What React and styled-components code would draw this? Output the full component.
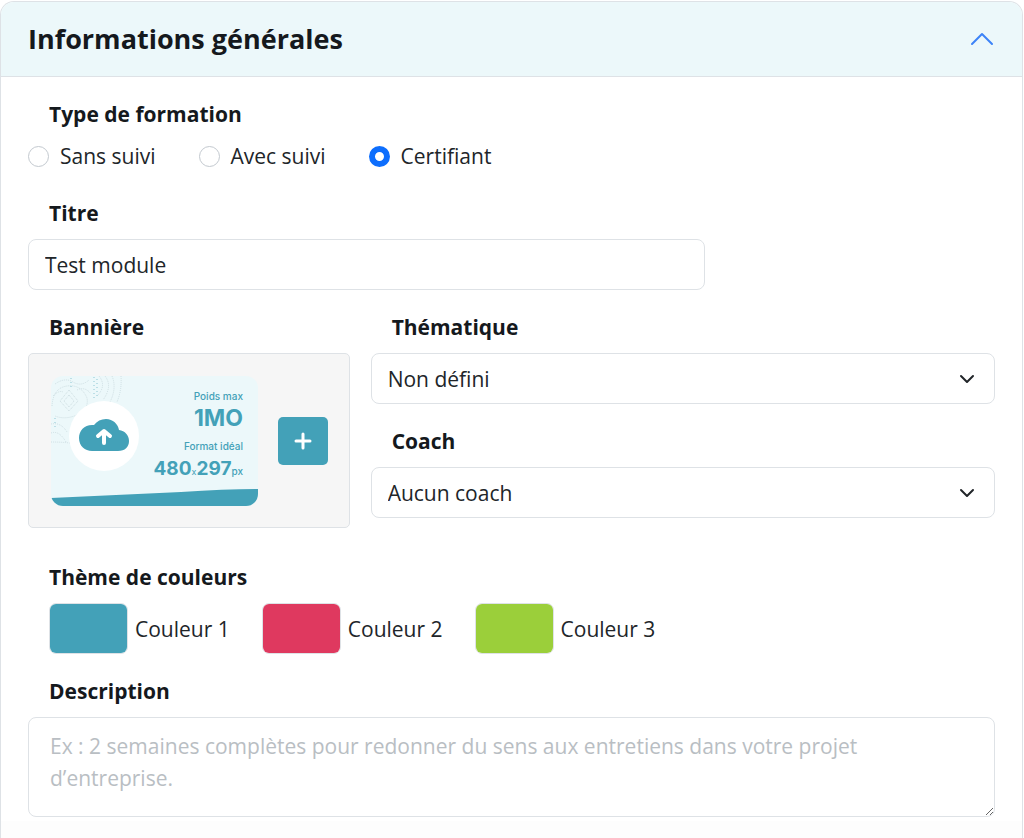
import React, { useState } from "react";
import styled, { createGlobalStyle } from "styled-components";

const Global = createGlobalStyle`
  *, *::before, *::after { box-sizing: border-box; }
  body {
    margin: 0;
    background: #fff;
    color: #212529;
    font: 400 21px/32px "Open Sans", sans-serif;
  }
  button, input, select, textarea { font: inherit; color: inherit; }
`;

const line = "#dee2e6";
const teal = "#43a1b8";

const Card = styled.section`
  display: flex;
  flex-direction: column;
  min-height: calc(100vh - 1px);
  margin: 1px 1px 0 0;
  border: 1px solid ${line};
  border-bottom: 0;
  border-radius: 14px 14px 0 0;
  overflow: hidden;
`;

const Header = styled.h2`
  margin: 0;
  border-bottom: 1px solid ${line};
`;

const Toggle = styled.button`
  display: flex;
  align-items: center;
  justify-content: space-between;
  width: 100%;
  padding: 18px 27px;
  border: 0;
  background: #ecf8fa;
  color: #15191d;
  font-size: 27px;
  font-weight: 700;
  line-height: 38px;
  text-align: left;
`;

const Body = styled.form`
  display: flex;
  flex-direction: column;
  gap: 21px;
  padding: 21px 27px 0;
`;

const Field = styled.div`
  display: flex;
  flex-direction: column;
  gap: 10px;
  min-width: 0;
  width: ${(p) => p.$width || "auto"};
`;

const Label = styled.label`
  padding-left: 21px;
  color: #15191d;
  font-weight: 700;
`;

const RadioRow = styled.div`
  display: flex;
  gap: 43px;
  padding-bottom: 4px;
`;

const Choice = styled.label`
  display: flex;
  align-items: center;
  gap: 11px;
`;

const Radio = styled.input`
  appearance: none;
  width: 21px;
  height: 21px;
  margin: 0;
  border: 1px solid #c3c9cf;
  border-radius: 50%;
  background: #fff;
  &:checked { border: 6px solid #0d6efd; }
`;

const control = `
  width: 100%;
  border: 1px solid ${line};
  border-radius: 8px;
  background-color: #fff;
`;

const TextInput = styled.input`
  ${control}
  height: 51px;
  padding: 8px 16px;
`;

const SelectWrap = styled.div`
  display: grid;
  align-items: center;
  > * { grid-area: 1 / 1; }
  > svg { justify-self: end; margin-right: 20px; pointer-events: none; }
`;

const Select = styled.select`
  ${control}
  appearance: none;
  height: 51px;
  padding: 8px 48px 8px 16px;
`;

const TextArea = styled.textarea`
  ${control}
  display: block;
  height: 100px;
  padding: 12px 21px;
  resize: vertical;
  &::placeholder { color: #b9bec3; opacity: 1; }
`;

const Columns = styled.div`
  display: grid;
  grid-template-columns: 34fr 66fr;
  gap: 21px;
  margin-bottom: 12px;
`;

const Stack = styled.div`
  display: flex;
  flex-direction: column;
  gap: 21px;
  min-width: 0;
`;

const BannerBox = styled.div`
  display: flex;
  align-items: center;
  gap: 20px;
  height: 175px;
  padding-left: 22px;
  border: 1px solid ${line};
  border-radius: 5px;
  background: #f6f6f6;
  > svg { flex: none; }
`;

const AddButton = styled.button`
  display: flex;
  align-items: center;
  justify-content: center;
  flex: none;
  width: 50px;
  height: 48px;
  padding: 0;
  border: 0;
  border-radius: 5px;
  background: ${teal};
`;

const Swatches = styled.div`
  display: flex;
  gap: 32px;
  padding-left: 21px;
`;

const SwatchLabel = styled.label`
  display: flex;
  align-items: center;
  gap: 7px;
`;

const Swatch = styled.input`
  appearance: none;
  width: 79px;
  height: 51px;
  padding: 0;
  border: 1px solid ${line};
  border-radius: 7px;
  background: ${(p) => p.value};
  overflow: hidden;
  &::-webkit-color-swatch-wrapper { padding: 0; }
  &::-webkit-color-swatch { border: 0; border-radius: 0; }
`;

const CardEnd = styled.div`
  flex: 1;
  margin-top: 4px;
  background: #fdfdfd;
`;

const Chevron = () => (
  <svg width="16" height="10" viewBox="0 0 16 10" fill="none" stroke="#212529" strokeWidth="2" strokeLinecap="round" strokeLinejoin="round">
    <path d="M2 2l6 6 6-6" />
  </svg>
);

const Banner = () => (
  <svg width="207" height="130" viewBox="0 0 207 130" fontFamily="Inter, sans-serif" fill={teal}>
    <clipPath id="frame"><rect width="207" height="130" rx="12" /></clipPath>
    <g clipPath="url(#frame)">
      <rect width="207" height="130" fill="#ecf8fa" />
      <g fill="none" stroke="#cddde1" strokeWidth="1" strokeDasharray="1 1">
        <path d="M18 14l9 11-9 10-9-10zM18 19l5 6-5 6-5-6z" />
        <path d="M1 30Q2 12 16 10T36 22Q38 34 26 39T4 40" />
        <path d="M4 8Q14 1 22 6T38 4M2 20Q8 14 12 16M26 14Q34 10 40 18" />
        <path d="M48 0Q56 10 46 20M54 0Q62 10 52 24M61 0Q66 12 59 26" />
        <path d="M0 48Q10 46 16 56M0 57Q8 54 15 66M0 66Q10 66 19 67" />
        <path d="M70 0Q71 14 66 26" />
      </g>
      <path d="M43 1v22M46 3v18M20 2v10M4 42v12" stroke="#8cc6d3" strokeWidth="1" strokeDasharray="1 3" />
      <path d="M0 122L130 116Q175 113 207 113V130H0Z" />
    </g>
    <circle cx="53" cy="60" r="35" fill="#fff" />
    <path d="M41 75C34 75 28 70 28 62C28 54 34 48 43 49C46 45 50 43 55 43C62 43 67 48 68 54C74 55 78 59 78 65C78 71 74 75 67 75Z" />
    <path d="M53 67V55M47 60l6-5 6 5" fill="none" stroke="#fff" strokeWidth="4" strokeLinecap="round" strokeLinejoin="round" />
    <g textAnchor="end">
      <text x="192" y="24" fontSize="10" fontWeight="500">Poids max</text>
      <text x="192" y="50" fontSize="23" fontWeight="700">1MO</text>
      <text x="192" y="74" fontSize="10" fontWeight="500">Format idéal</text>
      <text x="192" y="99" fontSize="19" fontWeight="700">
        480<tspan fontSize="9" fontWeight="400">x</tspan>297<tspan fontSize="10" fontWeight="500">px</tspan>
      </text>
    </g>
  </svg>
);

const types = ["Sans suivi", "Avec suivi", "Certifiant"];
const initialColors = ["#43a1b8", "#df395f", "#9bcf3a"];

export default function App() {
  const [type, setType] = useState("Certifiant");
  const [open, setOpen] = useState(true);
  const [colors, setColors] = useState(initialColors);

  return (
    <>
      <Global />
      <Card>
        <Header>
          <Toggle type="button" aria-expanded={open} onClick={() => setOpen(!open)}>
            Informations générales
            <svg width="27" height="27" viewBox="0 0 27 27" fill="none" stroke="#3d84f7" strokeWidth="2" strokeLinecap="round" strokeLinejoin="round">
              <path d="M4 18L14 8l10 10" />
            </svg>
          </Toggle>
        </Header>
        {open && (
          <Body>
            <Field role="radiogroup" aria-labelledby="type-label">
              <Label as="span" id="type-label">Type de formation</Label>
              <RadioRow>
                {types.map((t) => (
                  <Choice key={t}>
                    <Radio type="radio" name="type" checked={type === t} onChange={() => setType(t)} />
                    {t}
                  </Choice>
                ))}
              </RadioRow>
            </Field>
            <Field $width="70%">
              <Label htmlFor="titre">Titre</Label>
              <TextInput id="titre" defaultValue="Test module" />
            </Field>
            <Columns>
              <Field role="group" aria-labelledby="banner-label">
                <Label as="span" id="banner-label">Bannière</Label>
                <BannerBox>
                  <Banner />
                  <AddButton type="button" aria-label="Ajouter une bannière">
                    <svg width="18" height="18" viewBox="0 0 18 18" stroke="#fff" strokeWidth="3" strokeLinecap="round">
                      <path d="M9 2v14M2 9h14" />
                    </svg>
                  </AddButton>
                </BannerBox>
              </Field>
              <Stack>
                <Field>
                  <Label htmlFor="thematique">Thématique</Label>
                  <SelectWrap>
                    <Select id="thematique"><option>Non défini</option></Select>
                    <Chevron />
                  </SelectWrap>
                </Field>
                <Field>
                  <Label htmlFor="coach">Coach</Label>
                  <SelectWrap>
                    <Select id="coach"><option>Aucun coach</option></Select>
                    <Chevron />
                  </SelectWrap>
                </Field>
              </Stack>
            </Columns>
            <Field role="group" aria-labelledby="colors-label">
              <Label as="span" id="colors-label">Thème de couleurs</Label>
              <Swatches>
                {colors.map((c, i) => (
                  <SwatchLabel key={i}>
                    <Swatch
                      type="color"
                      value={c}
                      onChange={(e) => setColors(colors.map((old, j) => (j === i ? e.target.value : old)))}
                    />
                    Couleur {i + 1}
                  </SwatchLabel>
                ))}
              </Swatches>
            </Field>
            <Field>
              <Label htmlFor="description">Description</Label>
              <TextArea
                id="description"
                placeholder="Ex : 2 semaines complètes pour redonner du sens aux entretiens dans votre projet d’entreprise."
              />
            </Field>
          </Body>
        )}
        <CardEnd />
      </Card>
    </>
  );
}
